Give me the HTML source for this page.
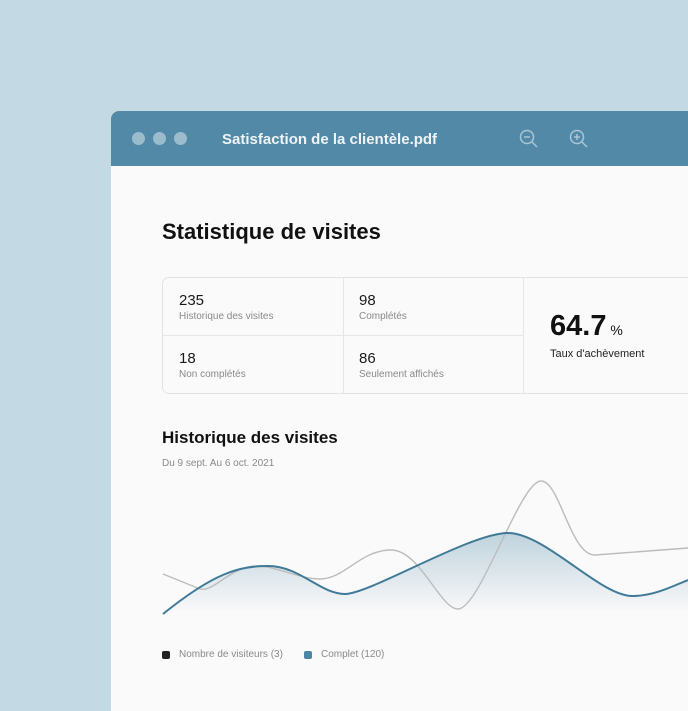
<!DOCTYPE html>
<html><head><meta charset="utf-8"><style>
*{margin:0;padding:0;box-sizing:border-box}
body{width:688px;height:688px;overflow:hidden;background:#c3d9e3;font-family:"Liberation Sans",sans-serif;position:relative}
.win{position:absolute;left:111px;top:111px;width:600px;height:600px;background:#fafafa;border-radius:8px 0 0 0;overflow:hidden}
.hd{height:55px;background:#5289a7;position:relative}
.dot{position:absolute;top:21px;width:13px;height:13px;border-radius:50%;background:#9bbccd}
.title{position:absolute;left:111px;top:20px;color:#eef4f7;font-size:15px;font-weight:bold}
.t{position:absolute;color:#111}
.card{position:absolute;left:51px;top:166px;width:560px;height:117px;border:1px solid #e3e3e3;border-radius:7px}
.v{position:absolute;left:0;top:0;width:1px;height:100%;background:#e6e6e6}
.n{position:absolute;font-size:15px;color:#1a1a1a}
.l{position:absolute;font-size:10px;color:#8a8a8a}
</style></head><body>
<div class="win">
<div class="hd">
<div class="dot" style="left:21px"></div><div class="dot" style="left:42px"></div><div class="dot" style="left:63px"></div>
<div class="title">Satisfaction de la clientèle.pdf</div>
<svg style="position:absolute;left:408px;top:18px" width="20" height="20" fill="none" stroke="#a9c6d6" stroke-width="1.5"><circle cx="8" cy="8" r="6.5"/><path d="M5 8h6M13 13l5 5"/></svg>
<svg style="position:absolute;left:458px;top:18px" width="20" height="20" fill="none" stroke="#a9c6d6" stroke-width="1.5"><circle cx="8" cy="8" r="6.5"/><path d="M5 8h6M8 5v6M13 13l5 5"/></svg>
</div>
<div class="t" style="left:51px;top:108px;font-size:22px;font-weight:bold">Statistique de visites</div>
<div class="card">
<div style="position:absolute;left:0;top:57px;width:360px;height:1px;background:#e6e6e6"></div>
<div class="v" style="left:180px"></div><div class="v" style="left:360px"></div>
<div class="n" style="left:16px;top:14px">235</div><div class="l" style="left:16px;top:33px">Historique des visites</div>
<div class="n" style="left:196px;top:14px">98</div><div class="l" style="left:196px;top:33px">Complétés</div>
<div class="n" style="left:16px;top:72px">18</div><div class="l" style="left:16px;top:91px">Non complétés</div>
<div class="n" style="left:196px;top:72px">86</div><div class="l" style="left:196px;top:91px">Seulement affichés</div>
<div style="position:absolute;left:387px;top:32px;font-size:29px;font-weight:bold;color:#111">64.7<span style="font-size:14px;font-weight:normal"> %</span></div>
<div style="position:absolute;left:387px;top:70px;font-size:11px;color:#222">Taux d'achèvement</div>
</div>
<div class="t" style="left:51px;top:317px;font-size:17px;font-weight:bold">Historique des visites</div>
<div class="l" style="left:51px;top:347px;font-size:10px">Du 9 sept. Au 6 oct. 2021</div>
<svg style="position:absolute;left:-111px;top:-111px" width="688" height="688">
<defs><linearGradient id="g" x1="0" y1="0" x2="0" y2="1"><stop offset="0" stop-color="#5289a7" stop-opacity=".35"/><stop offset="1" stop-color="#5289a7" stop-opacity="0"/></linearGradient></defs>
<path d="M163 614 C215 572 240 566 268 566 C300 566 320 594 345 594 C370 594 470 533 508 533 C545 533 600 596 632 596 C655 596 675 585 688 580 L688 610 L163 610Z" fill="url(#g)"/>
<path d="M163 574 L200 589 C215 592 230 566 258 566 C275 566 300 579 320 579 C345 579 360 550 391 550 C420 550 440 609 458 609 C480 609 520 481 541 481 C560 481 570 555 595 555 L688 548" fill="none" stroke="#bcbcbc" stroke-width="1.4"/>
<path d="M163 614 C215 572 240 566 268 566 C300 566 320 594 345 594 C370 594 470 533 508 533 C545 533 600 596 632 596 C655 596 675 585 688 580" fill="none" stroke="#3f7a98" stroke-width="2"/>
</svg>
<div style="position:absolute;left:51px;top:540px;width:8px;height:8px;border-radius:2px;background:#222"></div>
<div class="l" style="left:68px;top:538px">Nombre de visiteurs (3)</div>
<div style="position:absolute;left:193px;top:540px;width:8px;height:8px;border-radius:2px;background:#4c87a6"></div>
<div class="l" style="left:210px;top:538px">Complet (120)</div>
</div>
</body></html>
